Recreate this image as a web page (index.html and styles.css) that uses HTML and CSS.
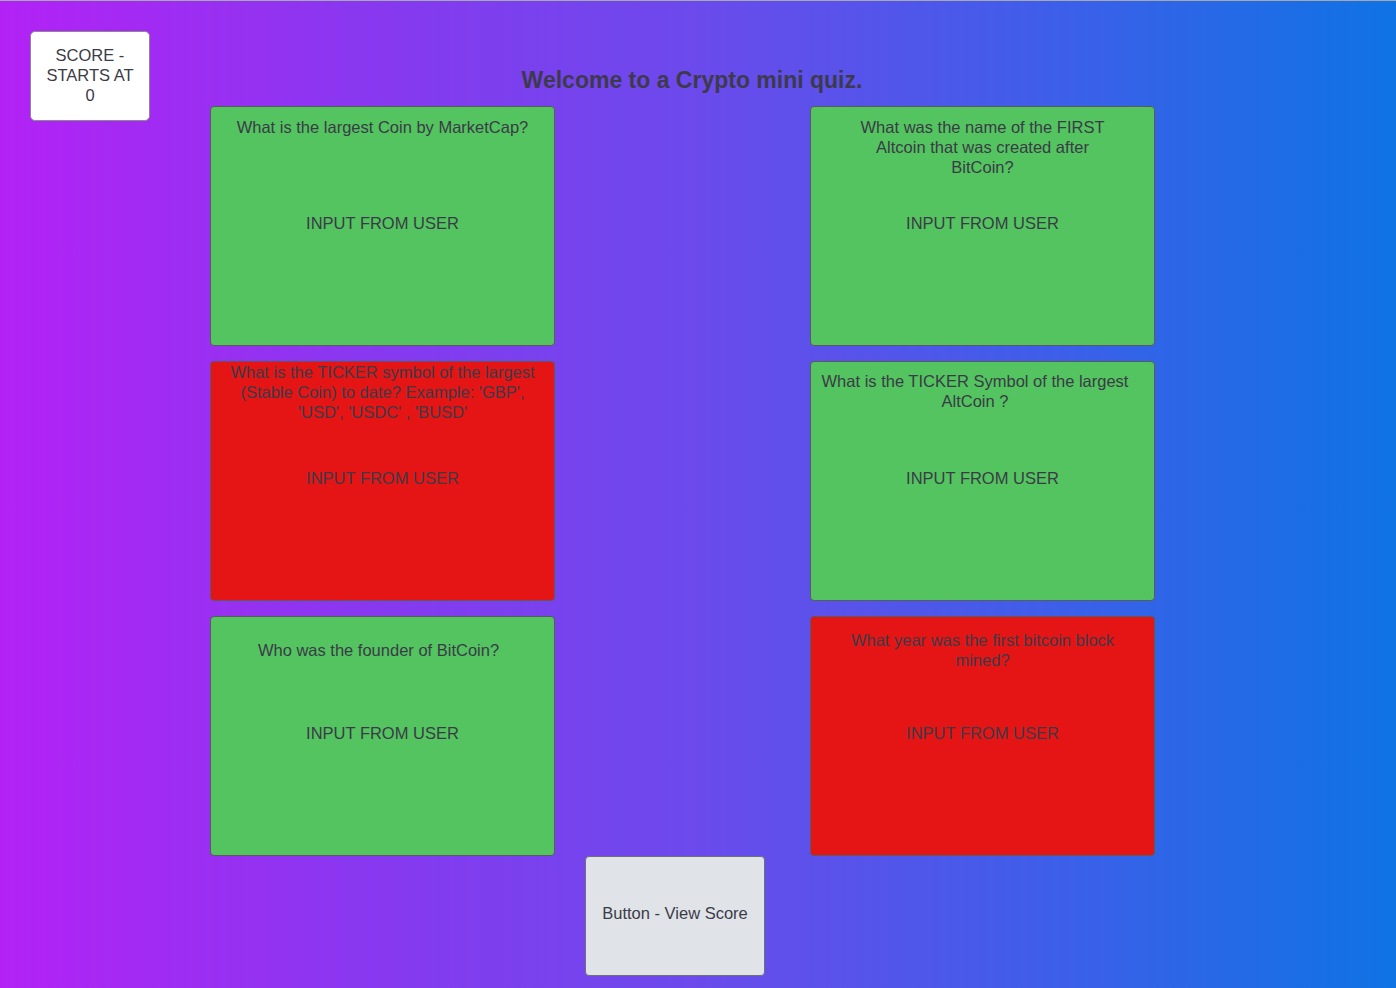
FILE: index.html
```html
<!DOCTYPE html>
<html lang="en">
<head>
<meta charset="utf-8">
<title>Crypto mini quiz</title>
<link rel="stylesheet" href="styles.css">
</head>
<body>
<div class="page">
  <div class="score">SCORE - STARTS AT 0</div>
  <h1 class="title">Welcome to a Crypto mini quiz.</h1>

  <div class="card green c-l r1">
    <div class="q q-l1">What is the largest Coin by MarketCap?</div>
    <div class="input">INPUT FROM USER</div>
  </div>
  <div class="card green c-r r1">
    <div class="q q-r1">What was the name of the FIRST Altcoin that was created after BitCoin?</div>
    <div class="input">INPUT FROM USER</div>
  </div>

  <div class="card red c-l r2">
    <div class="q q-l2">What is the TICKER symbol of the largest (Stable Coin) to date? Example: 'GBP', 'USD', 'USDC' , 'BUSD'</div>
    <div class="input">INPUT FROM USER</div>
  </div>
  <div class="card green c-r r2">
    <div class="q q-r2">What is the TICKER Symbol of the largest AltCoin ?</div>
    <div class="input">INPUT FROM USER</div>
  </div>

  <div class="card green c-l r3">
    <div class="q q-l3">Who was the founder of BitCoin?</div>
    <div class="input">INPUT FROM USER</div>
  </div>
  <div class="card red c-r r3">
    <div class="q q-r3">What year was the first bitcoin block mined?</div>
    <div class="input">INPUT FROM USER</div>
  </div>

  <button class="view-btn" type="button">Button - View Score</button>
</div>
</body>
</html>
```

FILE: styles.css
```css
html, body {
  margin: 0;
  padding: 0;
}

body {
  width: 1396px;
  height: 988px;
  overflow: hidden;
  font-family: "Liberation Sans", Arial, sans-serif;
  color: #3b3b47;
  background: linear-gradient(90deg, #b322f5 0%, #8a37f0 25%, #6b4aec 50%, #3e5ee9 75%, #0f73e4 100%);
  border-top: 1px solid #a7a7b0;
  box-sizing: border-box;
}

.page {
  display: grid;
  grid-template-columns: 120px 60px 345px 255px 345px;
  grid-template-rows: 75px 240px 15px 240px 15px 240px 120px;
  padding: 30px 0 0 30px;
}

.score {
  grid-column: 1;
  grid-row: 1 / 3;
  align-self: start;
  box-sizing: border-box;
  height: 90px;
  padding: 13px 14px 0;
  background: #ffffff;
  border: 1px solid #8a8a8a;
  border-radius: 5px;
  font-size: 16.5px;
  line-height: 20px;
  text-align: center;
}

.title {
  grid-column: 3 / 6;
  grid-row: 1;
  align-self: end;
  margin: 0 0 13px;
  padding-left: 19px;
  font-size: 23px;
  font-weight: bold;
  line-height: 26px;
  text-align: center;
  color: #3d3a4b;
}

.card {
  box-sizing: border-box;
  border: 1px solid #5b5b5b;
  border-radius: 4px;
  font-size: 16.5px;
  line-height: 20px;
  text-align: center;
  display: flex;
  flex-direction: column;
}

.green { background: #53c45f; }
.red { background: #e51515; }

.c-l { grid-column: 3; }
.c-r { grid-column: 5; }
.r1 { grid-row: 2; }
.r2 { grid-row: 4; }
.r3 { grid-row: 6; }

.q {
  box-sizing: border-box;
  height: 106px;
}

.q-l1 { padding: 10px 0 0; }
.q-r1 { padding: 10px 42px 0; }
.q-l2 { padding: 0 12px 0; }
.q-r2 { padding: 9px 25px 0 10px; }
.q-l3 { padding: 23px 8px 0 0; }
.q-r3 { padding: 13px 27px 0; }

.view-btn {
  grid-column: 3 / 6;
  grid-row: 7;
  justify-self: start;
  align-self: start;
  margin-left: 375px;
  width: 180px;
  height: 120px;
  padding: 0 0 6px;
  background: #e0e3e7;
  border: 1px solid #6f6f78;
  border-radius: 4px;
  font-family: "Liberation Sans", Arial, sans-serif;
  font-size: 16.5px;
  line-height: 20px;
  color: #3b3b47;
}
```
